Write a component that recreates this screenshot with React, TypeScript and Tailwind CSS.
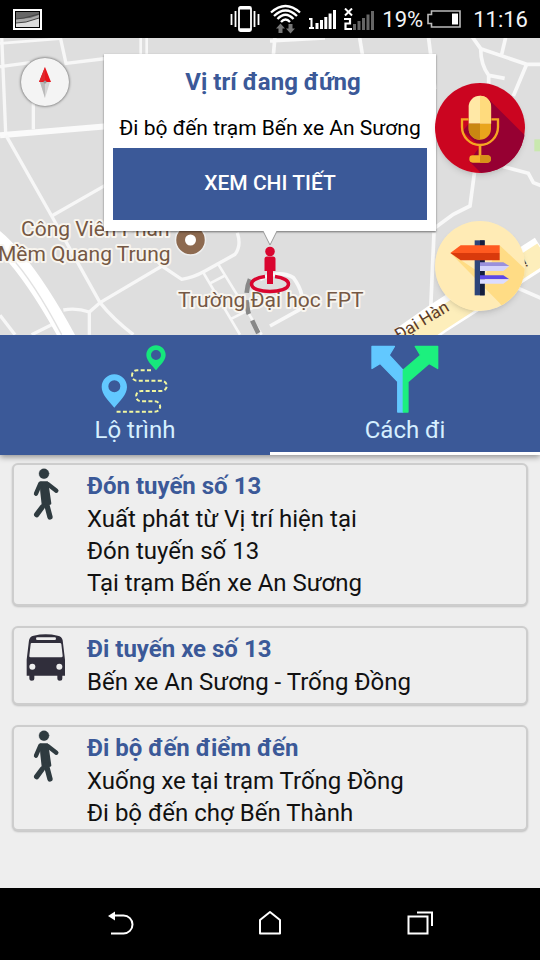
import React from "react";

function StatusBar() {
  return (
    <header className="flex h-[38px] items-center bg-black pl-[13px] pr-3 text-[22px] text-gray-100">
      <svg className="h-[21px] w-[29px]" viewBox="0 0 29 21" aria-label="Screenshot">
        <rect x="1" y="1" width="27" height="19" fill="#000" stroke="#fff" strokeWidth="2" />
        <rect x="3" y="3" width="23" height="15" fill="#aaa" />
        <path d="M3 3h23v3l-9 3-14 1z" fill="#666" />
        <path d="M3 14l9-1 14-4v9H3z" fill="#ddd" />
        <path d="M3 10l8-1 15-4M3 14l10-1 13-4" stroke="#444" fill="none" />
      </svg>
      <div className="ml-auto flex items-center">
        <svg className="h-[26px] w-[30px]" viewBox="0 0 30 26" fill="none" stroke="#fff" aria-label="Vibrate">
          <rect x="9" y="1" width="12" height="24" rx="1.5" strokeWidth="1.8" />
          <path d="M9 2.2h12M9 23.500h12" strokeWidth="2.600" />
          <path d="M5.500 5v16M24.500 5v16M1.500 8v11M28.500 8v11" strokeWidth="1.800" />
        </svg>
        <svg className="ml-2.5 h-[30px] w-[31px]" viewBox="0 0 31 30" fill="none" aria-label="Wi-Fi">
          <g stroke="#fff" strokeWidth="2.300">
            <path d="M1 8.500Q15.500-4.500 30 8.500" />
            <path d="M4 12Q15.500 1 27 12" />
            <path d="M7.500 15Q15.500 6.500 23.500 15" />
            <path d="M11 18Q15.500 13 20 18" />
          </g>
          <path d="M6 24.500l4.500-5 4.500 5h-2.500v4.500h-4v-4.500zM16 24.500h2.500V20h4v4.500H25l-4.500 5z" fill="#777" />
        </svg>
        <svg className="ml-2 h-[20px] w-[27px]" viewBox="0 0 27 20" aria-label="Signal 1">
          <path d="M0 10h2.500v10M0 19h5" stroke="#fff" strokeWidth="2" fill="none" />
          <path d="M6.500 14h3v6h-3zM11 11h3v9h-3zM15.300 8h3v12h-3zM19.600 4.500h3V20h-3zM24 1h3v19h-3z" fill="#fff" />
        </svg>
        <svg className="ml-2 h-[22px] w-[30px]" viewBox="0 0 30 22" aria-label="Signal 2">
          <path d="M1 .500l7 7m0-7l-7 7" stroke="#fff" strokeWidth="2" />
          <path d="M0 11h6v4.500H1.500V21H8" stroke="#fff" strokeWidth="2.200" fill="none" />
          <path d="M9 16h3v6H9zM13.500 13h3v9h-3zM18 10h3v12h-3zM22.500 6.500h3V22h-3zM27 3h3v19h-3z" fill="#666" />
        </svg>
        <span className="ml-2">19%</span>
        <svg className="ml-1 h-[18px] w-[34px]" viewBox="0 0 34 18" aria-label="Battery">
          <path d="M4.500 1H33v16H4.500v-3.500H1v-9h3.500z" fill="none" stroke="#bbb" strokeWidth="1.600" />
          <path d="M25 3.500h6v11h-6z" fill="#fff" />
        </svg>
        <time className="ml-3">11:16</time>
      </div>
    </header>
  );
}

function MapCanvas() {
  return (
    <svg
      className="block h-full w-full"
      viewBox="0 0 540 297"
      preserveAspectRatio="xMidYMid slice"
      aria-label="Bản đồ"
    >
      <rect width="540" height="297" fill="#dedede" />
      <g transform="translate(0 -2) scale(0.33333)" fill="none" stroke="#f7f7f7" strokeWidth="10">
        <path d="M0 92L90 80M180 0l18 82L330 66M5 0l12 290M100 90v190" />
        <path d="M422 0v60M440 0v60M0 22l180-14" strokeWidth="8" />
        <path d="M0 298L330 270" strokeWidth="18" stroke="#fafafa" />
        <path d="M18 298L155 540 300 800Q340 850 400 896M155 540L330 440" />
        <path d="M300 800L486 690 545 730Q580 725 615 705L705 655Q725 630 712 590M486 690L440 640M190 822Q230 815 268 828L300 800M268 828V896" />
        <path d="M610 710l110 186M655 685l130 211M630 742l48-25M690 850l70-35" strokeWidth="8" />
        <path d="M0 838L45 896M95 896l60-30" />
        <path d="M-20 600Q80 680 205 910" stroke="#fff" strokeWidth="48" />
        <path d="M30 660Q100 735 185 896" stroke="#e2e2e2" strokeWidth="4" />
        <path d="M750 730Q732 770 745 830L785 912" stroke="#888" strokeWidth="14" strokeDasharray="42 22" />
      </g>
      <g transform="translate(270 -2) scale(0.33333)" fill="none" stroke="#f8f8f8" strokeWidth="11">
        <path d="M0 15L165 6M15 0L10 60M268 0l10 60M475 0l20 160M605 0L632 38 770 85H820M708 0L695 55M632 38Q632 85 656 118L704 127M656 118V150M770 85L730 180" />
        <path d="M700 392L775 412 790 440 820 452M614 405L600 510 550 535 495 575M492 590L482 820M740 755L820 790" />
        <path d="M0 870L90 820Q110 780 70 725Q30 700-30 730" />
        <path d="M400 920L500 850 820 645" stroke="#fff" strokeWidth="94" />
        <path d="M400 930L500 858 820 650" stroke="#fdeebb" strokeWidth="66" />
        <path d="M793 310h30v36h-30z" fill="#c9e8ae" stroke="none" />
      </g>
      <g fill="#755844" stroke="#f8f5ef" strokeWidth="4" strokeLinejoin="round" paintOrder="stroke" fontSize="21">
        <text x="21" y="198">Công Viên Phần</text>
        <text x="-2" y="223">Mềm Quang Trung</text>
        <text x="178" y="269">Trường Đại học FPT</text>
      </g>
      <circle cx="190.500" cy="202" r="15" fill="#8d6a50" stroke="#eee" strokeWidth="1.500" />
      <circle cx="190.500" cy="202" r="5.500" fill="#fff" />
      <g fill="#5c3b28" fontSize="17">
        <text transform="translate(399 303) rotate(-31)">Đại Hàn</text>
        <text transform="translate(524 227) rotate(-31)">ị</text>
      </g>
      <g fill="#d9052f">
        <circle cx="270" cy="213.500" r="4.800" />
        <path d="M264.500 221q0-2.500 2.500-2.500h6q2.500 0 2.500 2.500v12h-2.500v13h-6v-13h-2.500z" />
        <path
          d="M265 238.500C256 239.500 251.500 243 251.500 246C251.500 256 288.500 256 288.500 246C288.500 243 284 239.500 275 238.500"
          fill="none"
          stroke="#d9052f"
          strokeWidth="3.500"
        />
      </g>
    </svg>
  );
}

function Callout() {
  return (
    <section className="absolute left-1/2 top-4 w-[332px] -translate-x-1/2 bg-white px-[9px] pb-[11px] pt-3 text-center shadow-[0_1px_2px_rgba(0,0,0,0.5)]">
      <h1 className="pl-1.5 text-2xl font-bold text-[#3b5998]">Vị trí đang đứng</h1>
      <p className="mt-[18px] whitespace-nowrap text-[21px] leading-6 text-black">Đi bộ đến trạm Bến xe An Sương</p>
      <button type="button" className="mt-2 block h-[72px] w-full bg-[#3b5998] text-[21px] font-medium text-white">
        XEM CHI TIẾT
      </button>
      <svg className="absolute left-1/2 top-full h-[15px] w-4 -translate-x-1/2" viewBox="0 0 16 15" aria-hidden="true">
        <path d="M1 0l7 14 7-14z" fill="#fff" />
        <path d="M1 0l7 14 7-14" fill="none" stroke="#999" />
      </svg>
    </section>
  );
}

function CompassButton() {
  return (
    <button
      type="button"
      aria-label="La bàn"
      className="absolute left-[21px] top-5 size-12 rounded-full bg-[#f4f4f4] shadow-[0_0_3px_rgba(0,0,0,0.7)]"
    >
      <svg className="size-12" viewBox="0 0 48 48">
        <path d="M24 9l6 15H18z" fill="#e8141b" />
        <path d="M24 9v13l-6 2z" fill="#e0262c" />
        <path d="M19 24h10l-5 16z" fill="#d5d5d5" />
        <path d="M19 24h5v16z" fill="#bbb" />
        <circle cx="24" cy="24" r="1.500" fill="#999" />
      </svg>
    </button>
  );
}

function MicButton() {
  return (
    <button type="button" aria-label="Tìm bằng giọng nói" className="absolute right-[15px] top-[45px] size-[90px] rounded-full shadow-md">
      <svg className="size-[90px]" viewBox="47 40 270 270">
        <defs>
          <clipPath id="mic-disc">
            <circle cx="182" cy="175" r="135" />
          </clipPath>
        </defs>
        <g clipPath="url(#mic-disc)">
          <path d="M47 40h270v270H47z" fill="#cb0520" />
          <path d="M207 88L340 220V330H205L150 275 182 230 130 185z" fill="#960032" />
        </g>
        <path d="M148 162V112a33.500 33.500 0 0 1 67 0V162z" fill="#ffe8a6" />
        <path d="M182 78a33.500 33.500 0 0 1 33.500 34V162H182z" fill="#ffdb7d" />
        <path d="M148 162V177a33.500 33.500 0 0 0 67 0V162z" fill="#e9a51c" />
        <path d="M148 162V177a33.500 33.500 0 0 0 34 33.500V162z" fill="#c98712" />
        <path d="M148 149H128V172a54 54 0 0 0 108 0V149H216" fill="none" stroke="#f5a623" strokeWidth="7" />
        <path d="M182 226V260" stroke="#f5a623" strokeWidth="8" />
        <rect x="150" y="257" width="64" height="22" rx="10" fill="#f5b42c" />
        <path d="M182 257h22a10 10 0 0 1 0 22h-22z" fill="#d79218" />
      </svg>
    </button>
  );
}

function DirectionsButton() {
  return (
    <button type="button" aria-label="Chỉ đường" className="absolute right-[15px] top-[183px] size-[90px] rounded-full shadow-md">
      <svg className="size-[90px]" viewBox="47 455 270 270">
        <defs>
          <clipPath id="sign-disc">
            <circle cx="182" cy="590" r="135" />
          </clipPath>
        </defs>
        <g clipPath="url(#sign-disc)">
          <path d="M47 455h270v270H47z" fill="#ffebb5" />
          <path d="M93 551L240 700 270 740 340 680V620L241 528 196 620z" fill="#ffdc85" />
        </g>
        <path d="M166 513h30v165h-30z" fill="#2d4479" />
        <path d="M182 513h14v165h-14z" fill="#141d3e" />
        <path d="M93 551L124 528H241V551z" fill="#ff5a20" />
        <path d="M93 551L124 573H241V551z" fill="#d93a0c" />
        <path d="M182 579H252L270 590H182z" fill="#9a91dc" />
        <path d="M182 590H270L252 605H182z" fill="#d5d4fa" />
        <path d="M182 618H252L270 630H182z" fill="#5d49e8" />
        <path d="M182 630H270L252 643H182z" fill="#dcdcff" />
      </svg>
    </button>
  );
}

function RouteIcon() {
  return (
    <svg className="size-[68px]" viewBox="62 32 204 204" aria-hidden="true">
      <path
        d="M212 108H170C150 108 150 139 170 139H242C265 139 265 170 242 170H183C162 170 162 201 183 201H223C245 201 245 232 223 232H108"
        fill="none"
        stroke="#f2f7a0"
        strokeWidth="6"
        strokeDasharray="12 7"
      />
      <path
        fillRule="evenodd"
        d="M102 120c21 0 38 17 38 38 0 23-22 42-38 62-16-20-38-39-38-62 0-21 17-38 38-38zm0 18a18 18 0 1 0 0 36 18 18 0 0 0 0-36z"
        fill="#62c8ff"
      />
      <path
        fillRule="evenodd"
        d="M227 33c16 0 29 13 29 29 0 17-17 31-29 46-12-15-29-29-29-46 0-16 13-29 29-29zm0 14a15 15 0 1 0 0 30 15 15 0 0 0 0-30z"
        fill="#16e67c"
      />
    </svg>
  );
}

function ForkIcon() {
  return (
    <svg className="size-[68px]" viewBox="62 32 206 204" strokeLinejoin="round" strokeWidth="4" aria-hidden="true">
      <path d="M159 234H143V142L90 87 65 102V35H133L117 62 159 107z" fill="#62c8ff" stroke="#62c8ff" />
      <path d="M160 234H174V142L238 87 264 102V35H196L212 62 160 107z" fill="#1cf07e" stroke="#1cf07e" />
    </svg>
  );
}

function Tab({ label, icon, selected }: { label: string; icon: React.ReactNode; selected: boolean }) {
  return (
    <button
      type="button"
      role="tab"
      aria-selected={selected}
      className={
        "flex h-[120px] flex-1 flex-col items-center border-b-[3px] pt-[10px] text-2xl text-[#d5efff] " +
        (selected ? "border-white" : "border-[#3b5998]")
      }
    >
      {icon}
      <span className="leading-[34px]">{label}</span>
    </button>
  );
}

function WalkIcon() {
  return (
    <svg className="h-[52px] w-7" viewBox="95 40 84 156" fill="#2f3b40" stroke="#2f3b40" strokeLinecap="round" aria-label="Đi bộ">
      <circle cx="131" cy="57" r="15" />
      <path d="M122 84h18l9 62-21 4-4-36z" strokeWidth="8" strokeLinejoin="round" />
      <path d="M120 87L107 117M142 88L168 108" strokeWidth="13" />
      <path d="M138 145L149 187" strokeWidth="16" />
      <path d="M126 157L109 180" strokeWidth="16" />
    </svg>
  );
}

function BusIcon() {
  return (
    <svg className="mt-[3px] h-[47px] w-10" viewBox="78 43 120 141" aria-label="Xe buýt">
      <path d="M80 168V120L87 62Q89 50 101 48 137 40 173 48 186 50 188 62L195 120V168H187V176a7 7 0 0 1-15 0V168H103V176a7 7 0 0 1-15 0V168z" fill="#302e3b" />
      <rect x="108" y="53" width="60" height="8" rx="4" fill="#eee" />
      <path d="M95 70H180Q183 70 184 73L188 108Q188 113 184 113H92Q87 113 88 108L92 73Q92 70 95 70z" fill="#eee" />
      <circle cx="97" cy="141" r="9" fill="#eee" />
      <circle cx="178" cy="141" r="9" fill="#eee" />
    </svg>
  );
}

const steps = [
  {
    mode: "walk",
    title: "Đón tuyến số 13",
    lines: ["Xuất phát từ Vị trí hiện tại", "Đón tuyến số 13", "Tại trạm Bến xe An Sương"],
  },
  { mode: "bus", title: "Đi tuyến xe số 13", lines: ["Bến xe An Sương - Trống Đồng"] },
  { mode: "walk", title: "Đi bộ đến điểm đến", lines: ["Xuống xe tại trạm Trống Đồng", "Đi bộ đến chợ Bến Thành"] },
];

function StepCard({ mode, title, lines }: (typeof steps)[number]) {
  return (
    <li className="flex gap-[21px] rounded-md border-2 border-[#cdcdcd] bg-[#eee] pl-3 text-2xl leading-8 text-[#111] shadow-[0_1px_2px_rgba(0,0,0,0.2)] not-last:pb-[5px]">
      <div className="flex w-10 shrink-0 items-start justify-center pt-[3px]">{mode === "bus" ? <BusIcon /> : <WalkIcon />}</div>
      <div className="pt-[5px]">
        <h2 className="font-bold leading-[33px] text-[#3b5998]">{title}</h2>
        {lines.map((line) => (
          <p key={line}>{line}</p>
        ))}
      </div>
    </li>
  );
}

function NavBar() {
  return (
    <nav className="flex h-[72px] items-center justify-center gap-[102px] bg-black">
      <button type="button" aria-label="Quay lại" className="size-12">
        <svg className="size-12" viewBox="0 0 48 48" fill="none" stroke="#fff" strokeWidth="2">
          <path d="M17 15.500H27.500a9 9 0 0 1 0 18H15" />
          <path d="M12 16l7-4.500v9z" fill="#fff" stroke="none" />
        </svg>
      </button>
      <button type="button" aria-label="Màn hình chính" className="size-12">
        <svg className="size-12" viewBox="0 0 48 48" fill="none" stroke="#fff" strokeWidth="2">
          <path d="M14 33.500V20l10-8 10 8v13.500z" strokeLinejoin="round" />
        </svg>
      </button>
      <button type="button" aria-label="Ứng dụng gần đây" className="size-12">
        <svg className="size-12" viewBox="0 0 48 48" fill="none" stroke="#fff" strokeWidth="2">
          <path d="M12.500 16.500h19v17h-19zM21 12.500h15V26" />
        </svg>
      </button>
    </nav>
  );
}

export default function App() {
  return (
    <div className="flex min-h-screen flex-col bg-[#eee] font-[Roboto,'Noto_Sans',sans-serif]">
      <StatusBar />
      <main className="flex flex-1 flex-col">
        <div className="relative h-[297px] overflow-hidden">
          <MapCanvas />
          <CompassButton />
          <Callout />
          <MicButton />
          <DirectionsButton />
        </div>
        <div role="tablist" className="flex bg-[#3b5998] shadow-[0_2px_6px_rgba(0,0,0,0.4)]">
          <Tab label="Lộ trình" icon={<RouteIcon />} selected={false} />
          <Tab label="Cách đi" icon={<ForkIcon />} selected={true} />
        </div>
        <ul className="flex flex-col gap-5 px-3 pt-2">
          {steps.map((step) => (
            <StepCard key={step.title} {...step} />
          ))}
        </ul>
      </main>
      <NavBar />
    </div>
  );
}
